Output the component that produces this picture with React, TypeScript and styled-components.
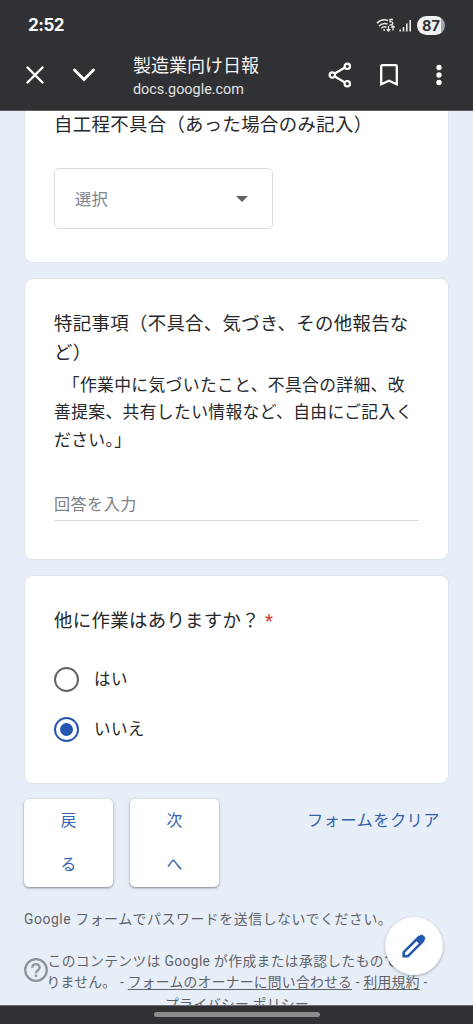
import React from "react";
import styled, { createGlobalStyle } from "styled-components";

const Global = createGlobalStyle`
  * { box-sizing: border-box; }
  body { margin: 0; background: #e8eef7; font-family: Roboto, "Noto Sans CJK JP", sans-serif; }
  button { font: inherit; border: 0; background: none; padding: 0; }
`;

const Screen = styled.div`
  width: 473px;
  height: 1024px;
  display: flex;
  flex-direction: column;
  overflow: hidden;
  position: relative;
`;

const Header = styled.header`
  flex: none;
  height: 111px;
  background: #303134;
  color: #fff;
  border-bottom: 1px solid #5d5f63;
`;

const StatusBar = styled.div`
  height: 50px;
  display: flex;
  justify-content: space-between;
  align-items: center;
  padding: 0 28px;
`;

const Clock = styled.span`
  font: 700 17px/20px Inter, sans-serif;
  letter-spacing: -0.5px;
`;

const StatusIcons = styled.div`
  display: flex;
  align-items: center;
`;

const Battery = styled.span`
  width: 28px;
  height: 19px;
  margin-left: 5px;
  border-radius: 10px;
  background: linear-gradient(90deg, #f1f1f1 86%, #a5a6a8 86%);
  color: #303134;
  font: 700 14.5px/19px Inter, sans-serif;
  text-align: center;
`;

const Toolbar = styled.div`
  height: 50px;
  display: flex;
  align-items: center;
  padding: 0 10px 0 20px;
`;

const IconButton = styled.button<{ $w: number }>`
  width: ${(p) => p.$w}px;
  height: 50px;
  display: flex;
  align-items: center;
  justify-content: center;
  color: #fff;
`;

const PageTitle = styled.div`
  flex: 1;
  padding: 5px 0 0 14px;
  white-space: nowrap;
`;

const SiteName = styled.div`
  font-size: 18px;
  line-height: 24px;
  color: #f4f4f4;
`;

const SiteUrl = styled.div`
  font-size: 14.4px;
  line-height: 24px;
  color: #e3e3e3;
`;

const Content = styled.main`
  flex: 1;
  min-height: 0;
  overflow: hidden;
  background: #e8eef7;
  padding: 0 24px;
`;

const Card = styled.section<{ $h: number; $clipped?: boolean }>`
  height: ${(p) => p.$h}px;
  margin-bottom: 15px;
  padding: ${(p) => (p.$clipped ? "0" : "30px")} 29px 0;
  background: #fff;
  border: 1px solid #dfe3ea;
  border-top-width: ${(p) => (p.$clipped ? 0 : 1)}px;
  border-radius: ${(p) => (p.$clipped ? "0 0 9px 9px" : "9px")};
`;

const Question = styled.h2`
  margin: 0;
  font-weight: 400;
  font-size: 18.4px;
  letter-spacing: 0.34px;
  line-height: 29px;
  color: #26272a;
  white-space: nowrap;
`;

const ClippedQuestion = styled(Question)`
  line-height: 27px;
`;

const Required = styled.span`
  color: #d93025;
  margin-left: 5px;
`;

const Description = styled.p`
  margin: 5px 0 0;
  font-size: 16.8px;
  letter-spacing: 0.36px;
  line-height: 27.4px;
  color: #26272a;
  white-space: pre;
`;

const Select = styled.div`
  width: 219px;
  height: 61px;
  margin-top: 30px;
  padding: 0 24px 1px 20px;
  display: flex;
  align-items: center;
  justify-content: space-between;
  border: 1px solid #dadce0;
  border-radius: 5px;
  font-size: 16.4px;
  color: #80868b;
  svg { margin-top: 2px; }
`;

const TextInput = styled.div`
  height: 36px;
  margin-top: 31px;
  border-bottom: 1px solid #dadce0;
  font-size: 16.1px;
  letter-spacing: 0.45px;
  line-height: 39px;
  color: #7b8085;
`;

const RadioGroup = styled.div`
  margin-top: 31px;
  display: flex;
  flex-direction: column;
  gap: 24px;
`;

const RadioRow = styled.label`
  height: 26px;
  display: flex;
  align-items: center;
  gap: 15px;
  font-size: 16.5px;
  letter-spacing: 0.4px;
  line-height: 24px;
  color: #26272a;
`;

const RadioMark = styled.span<{ $on?: boolean }>`
  width: 25px;
  height: 25px;
  display: grid;
  place-items: center;
  border-radius: 50%;
  border: 2.3px solid ${(p) => (p.$on ? "#2457b0" : "#5f6368")};
  &::after {
    content: "";
    width: 13px;
    height: 13px;
    border-radius: 50%;
    background: ${(p) => (p.$on ? "#2457b0" : "transparent")};
  }
`;

const RadioLabel = styled.span`
  padding-top: 1px;
`;

const Actions = styled.div`
  height: 88px;
  display: flex;
  align-items: flex-start;
  gap: 17px;
  color: #3462ac;
`;

const NavButton = styled.button`
  width: 89px;
  height: 88px;
  border-radius: 5px;
  background: #fff;
  color: inherit;
  font-size: 15.8px;
  line-height: 44px;
  box-shadow: 0 1px 2px rgba(0, 0, 0, 0.35), 0 1px 4px rgba(0, 0, 0, 0.12);
  span { display: block; }
`;

const ClearButton = styled.button`
  margin: 0 9px 0 auto;
  color: inherit;
  font-size: 16.3px;
  letter-spacing: 0.42px;
  line-height: 43px;
  white-space: nowrap;
`;

const Warning = styled.p`
  margin: 22px 0 0;
  font-size: 13.9px;
  letter-spacing: 0.56px;
  line-height: 20px;
  color: #5f6368;
  white-space: nowrap;
`;

const Disclaimer = styled.div`
  display: flex;
  margin-top: 22px;
  color: #5f6368;
`;

const HelpIcon = styled.svg`
  flex: none;
  margin-top: 6px;
`;

const DisclaimerText = styled.div`
  flex: 1;
  margin-right: 23px;
  font-size: 13.8px;
  letter-spacing: 0.25px;
  line-height: 21.3px;
  text-align: center;
  white-space: nowrap;
  a { text-decoration: underline; text-underline-offset: 2px; }
`;

const DisclaimerLine = styled.div<{ $spacing?: number }>`
  margin: 0 -12px;
  letter-spacing: ${(p) => p.$spacing ?? 0.25}px;
`;

const EditFab = styled.button`
  position: absolute;
  left: 385px;
  top: 917px;
  width: 58px;
  height: 58px;
  border-radius: 50%;
  background: #fff;
  display: grid;
  place-items: center;
  box-shadow: 0 1px 3px rgba(0, 0, 0, 0.3);
`;

const SystemNav = styled.footer`
  flex: none;
  height: 19px;
  background: #303134;
  border-top: 1px solid #6b6e73;
  display: flex;
  justify-content: center;
  padding-top: 6px;
  &::after {
    content: "";
    width: 166px;
    height: 5px;
    border-radius: 3px;
    background: #8b8c8e;
  }
`;

export default function App() {
  return (
    <Screen>
      <Global />
      <Header>
        <StatusBar>
          <Clock>2:52</Clock>
          <StatusIcons>
            <svg width="36" height="17" viewBox="0 0 36 17" fill="none" stroke="#e8e8e8" strokeWidth="1.5">
              <path d="M1 6.2C4 3 8.500 2.300 12 3.500M3 9C5.500 6.500 8.500 6 11.500 7M5.200 11.300C7 9.600 9 9.500 10.500 10.300" />
              <circle cx="8.200" cy="13" r="1" fill="#e8e8e8" stroke="none" />
              <path d="M17 2.500h-3v2.300c3-.6 3.800 2.700 1 3.200h-1.500M12.500 9v5m-1.800-1.700 1.800 1.800 1.800-1.800M17 13.500V8.800m-1.700 1.700L17 8.800l1.700 1.700" strokeWidth="1.300" />
              <path d="M24.200 14.500v-2M27.500 14.500V10M30.800 14.500V6.500M34.200 14.500V3" strokeWidth="1.600" />
            </svg>
            <Battery>87</Battery>
          </StatusIcons>
        </StatusBar>
        <Toolbar>
          <IconButton $w={29} aria-label="閉じる">
            <svg width="18" height="18" viewBox="0 0 18 18" stroke="currentColor" strokeWidth="2.400" strokeLinecap="round">
              <path d="M1.500 1.500l15 15M16.500 1.500l-15 15" />
            </svg>
          </IconButton>
          <IconButton $w={70} aria-label="最小化">
            <svg width="24" height="14" viewBox="0 0 24 14" fill="none" stroke="currentColor" strokeWidth="2.800" strokeLinecap="round">
              <path d="M2.500 2l9.500 9.500L21.500 2" />
            </svg>
          </IconButton>
          <PageTitle>
            <SiteName>製造業向け日報</SiteName>
            <SiteUrl>docs.google.com</SiteUrl>
          </PageTitle>
          <IconButton $w={48} aria-label="共有">
            <svg width="24" height="26" viewBox="0 0 24 26" fill="none" stroke="currentColor" strokeWidth="2.200">
              <path d="M6.800 11.500l9.700-5.700M6.800 14.500l9.700 5.700" />
              <circle cx="4.300" cy="13" r="2.700" />
              <circle cx="19.300" cy="4.300" r="2.700" />
              <circle cx="19.300" cy="21.700" r="2.700" />
            </svg>
          </IconButton>
          <IconButton $w={50} aria-label="ブックマーク">
            <svg width="18" height="22" viewBox="0 0 18 22" fill="none" stroke="currentColor" strokeWidth="2.300">
              <path d="M1.200 20.200V2.200q0-1 1-1h13.600q1 0 1 1v18L9 16.700z" />
            </svg>
          </IconButton>
          <IconButton $w={49} aria-label="メニュー">
            <svg width="6" height="22" viewBox="0 0 6 22" fill="currentColor">
              <circle cx="3" cy="3.500" r="2.700" />
              <circle cx="3" cy="11" r="2.700" />
              <circle cx="3" cy="18.500" r="2.700" />
            </svg>
          </IconButton>
        </Toolbar>
      </Header>

      <Content>
        <Card $h={152} $clipped>
          <ClippedQuestion>自工程不具合（あった場合のみ記入）</ClippedQuestion>
          <Select>
            選択
            <svg width="12" height="6" viewBox="0 0 12 6">
              <path d="M0 0h12L6 6z" fill="#5f6368" />
            </svg>
          </Select>
        </Card>
        <Card $h={282}>
          <Question>
            特記事項（不具合、気づき、その他報告な
            <br />
            ど）
          </Question>
          <Description>{"　「作業中に気づいたこと、不具合の詳細、改\n善提案、共有したい情報など、自由にご記入く\nださい。」"}</Description>
          <TextInput>回答を入力</TextInput>
        </Card>
        <Card $h={209}>
          <Question>
            他に作業はありますか？
            <Required>*</Required>
          </Question>
          <RadioGroup>
            <RadioRow>
              <RadioMark />
              <RadioLabel>はい</RadioLabel>
            </RadioRow>
            <RadioRow>
              <RadioMark $on />
              <RadioLabel>いいえ</RadioLabel>
            </RadioRow>
          </RadioGroup>
        </Card>
        <Actions>
          <NavButton>
            <span>戻</span>
            <span>る</span>
          </NavButton>
          <NavButton>
            <span>次</span>
            <span>へ</span>
          </NavButton>
          <ClearButton>フォームをクリア</ClearButton>
        </Actions>
        <Warning>Google フォームでパスワードを送信しないでください。</Warning>
        <Disclaimer>
          <HelpIcon width="24" height="26" viewBox="0 0 24 26" fill="none" stroke="#8f949a" strokeWidth="2.300">
            <circle cx="12" cy="13" r="10.800" />
            <path d="M8.300 10.700c0-4.700 7.400-4.700 7.400-.1 0 2.700-3.700 2.800-3.700 5.600" />
            <path d="M12 17.500v2.400" />
          </HelpIcon>
          <DisclaimerText>
            <DisclaimerLine $spacing={0.36}>このコンテンツは Google が作成または承認したものではあ</DisclaimerLine>
            <DisclaimerLine>
              りません。 - <a>フォームのオーナーに問い合わせる</a> - <a>利用規約</a> -
            </DisclaimerLine>
            <DisclaimerLine>
              <a>プライバシー ポリシー</a>
            </DisclaimerLine>
          </DisclaimerText>
        </Disclaimer>
      </Content>
      <SystemNav />
      <EditFab aria-label="編集">
        <svg width="26" height="26" viewBox="0 0 26 26" fill="none" stroke="#2457b0" strokeWidth="2.600">
          <path d="M2.700 23.300v-4.100L17.900 4l4.100 4.100L6.800 23.300z" />
          <path d="M14.800 7.100L19.200 2.700q1.500-1.300 3 .1l1 1q1.400 1.500.1 3L18.900 11.200z" fill="#2457b0" strokeWidth="1" />
        </svg>
      </EditFab>
    </Screen>
  );
}
